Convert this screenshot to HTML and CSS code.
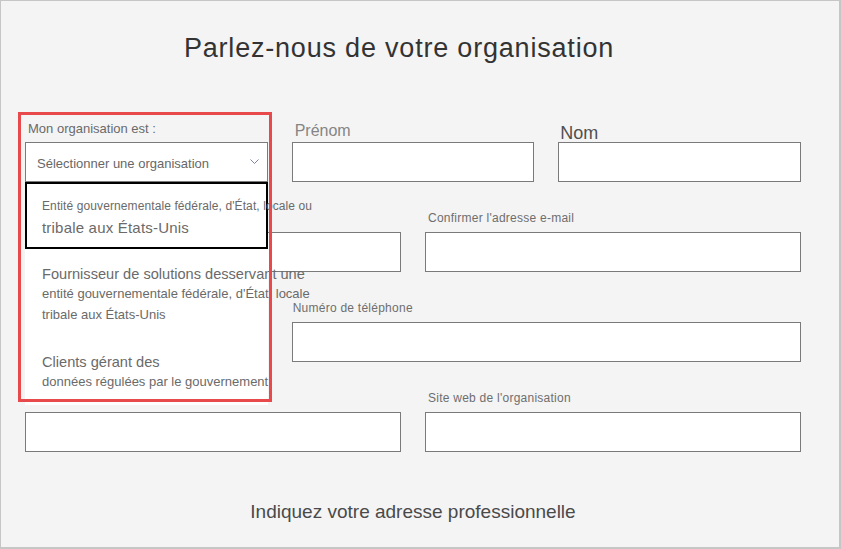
FILE: index.html
```html
<!DOCTYPE html>
<html lang="fr">
<head>
<meta charset="utf-8">
<title>Parlez-nous de votre organisation</title>
<link rel="stylesheet" href="styles.css">
</head>
<body>
<div class="frame">
  <h1 class="title">Parlez-nous de votre organisation</h1>
  <form class="form">
    <div class="row row-3">
      <div class="field field-org">
        <label class="lbl lbl-org">Mon organisation est :</label>
        <div class="select">
          <span>Sélectionner une organisation</span>
          <svg class="chev" width="9" height="5" viewBox="0 0 9 5"><polyline points="0.5,0.5 4.5,4.5 8.5,0.5" fill="none" stroke="#7d83a6" stroke-width="1"/></svg>
        </div>
        <ul class="dropdown">
          <li class="opt opt-active">
            <span class="sm tight">Entité gouvernementale fédérale, d'État, locale ou</span>
            <span class="lg">tribale aux États-Unis</span>
          </li>
          <li class="opt opt-two">
            <span class="md">Fournisseur de solutions desservant une</span>
            <span class="sm2">entité gouvernementale fédérale, d'État, locale</span>
            <span class="sm2">tribale aux États-Unis</span>
          </li>
          <li class="opt opt-three">
            <span class="md">Clients gérant des</span>
            <span class="sm2">données régulées par le gouvernement</span>
          </li>
        </ul>
      </div>
      <div class="field">
        <label class="lbl lbl-first">Prénom</label>
        <div class="input"></div>
      </div>
      <div class="field">
        <label class="lbl lbl-last">Nom</label>
        <div class="input"></div>
      </div>
    </div>
    <div class="row row-2">
      <div class="field">
        <label class="lbl" aria-label="Adresse e-mail"></label>
        <div class="input"></div>
      </div>
      <div class="field">
        <label class="lbl">Confirmer l'adresse e-mail</label>
        <div class="input"></div>
      </div>
    </div>
    <div class="row row-3">
      <div class="field">
        <label class="lbl" aria-label="Intitulé du poste"></label>
        <div class="input"></div>
      </div>
      <div class="field span-2">
        <label class="lbl lbl-phone">Numéro de téléphone</label>
        <div class="input"></div>
      </div>
    </div>
    <div class="row row-2">
      <div class="field">
        <label class="lbl" aria-label="Nom de l'organisation"></label>
        <div class="input"></div>
      </div>
      <div class="field">
        <label class="lbl">Site web de l'organisation</label>
        <div class="input"></div>
      </div>
    </div>
    <h2 class="subtitle">Indiquez votre adresse professionnelle</h2>
  </form>
  <div class="highlight"></div>
</div>
</body>
</html>
```

FILE: styles.css
```css
html, body {
  margin: 0;
  padding: 0;
  background: #f4f4f4;
}

.frame {
  position: relative;
  width: 841px;
  height: 549px;
  box-sizing: border-box;
  border: 1px solid #c6c6c6;
  border-right-width: 2px;
  border-bottom-width: 2px;
  background: #f4f4f4;
  overflow: hidden;
  font-family: "Liberation Sans", Arial, sans-serif;
}

.title {
  margin: 0;
  padding: 31px 42px 0 0;
  font-size: 27px;
  line-height: 32px;
  font-weight: normal;
  letter-spacing: 0.8px;
  text-align: center;
  color: #333333;
}

.form {
  margin: 28px 0 0 24px;
  width: 776px;
}

.row {
  display: grid;
  column-gap: 24px;
}

.row-3 {
  grid-template-columns: 1fr 1fr 1fr;
}

.row-2 {
  grid-template-columns: 1fr 1fr;
}

.span-2 {
  grid-column: span 2;
}

.field {
  display: flex;
  flex-direction: column;
}

.field-org {
  position: relative;
  z-index: 2;
}

.lbl {
  height: 50px;
  box-sizing: border-box;
  display: flex;
  align-items: flex-end;
  padding: 0 0 7px 3px;
  font-size: 12px;
  line-height: 14px;
  letter-spacing: 0.25px;
  color: #6e6e6e;
  white-space: nowrap;
}

.lbl-org {
  font-size: 13px;
  line-height: 15px;
  letter-spacing: 0;
  padding-bottom: 6px;
  color: #6a6a6a;
}

.lbl-first {
  font-size: 16px;
  line-height: 18px;
  letter-spacing: 0;
  padding-bottom: 2.5px;
  color: #858585;
}

.lbl-last {
  font-size: 18px;
  line-height: 18px;
  letter-spacing: 0;
  padding-bottom: 0;
  padding-left: 2px;
  color: #505050;
}

.lbl-phone {
  padding-left: 1px;
}

.input {
  height: 40px;
  box-sizing: border-box;
  border: 1px solid #7a7a7a;
  background: #ffffff;
}

.select {
  height: 40px;
  box-sizing: border-box;
  border: 1px solid #7a7a7a;
  background: #ffffff;
  display: flex;
  align-items: center;
  justify-content: space-between;
  padding: 3px 8px 0 11px;
  font-size: 13px;
  color: #676767;
}

.chev {
  display: block;
  margin-top: -4px;
}

.dropdown {
  position: absolute;
  top: 90px;
  left: 0;
  width: 243px;
  margin: 0;
  padding: 0 0 13px;
  list-style: none;
  background: #ffffff;
  color: #6a6a6a;
  white-space: nowrap;
}

.opt span {
  display: block;
}

.opt-active {
  height: 67px;
  box-sizing: border-box;
  border: 2px solid #000000;
  padding: 15px 0 0 15px;
}

.opt-two {
  padding: 16px 0 0 17px;
}

.opt-three {
  padding: 28px 0 0 17px;
}

.sm {
  font-size: 12px;
  line-height: 14px;
}

.tight {
  letter-spacing: 0.1px;
}

.lg {
  font-size: 15px;
  line-height: 22px;
  margin-top: 4px;
  letter-spacing: 0.2px;
}

.md {
  font-size: 14.6px;
  line-height: 18px;
}

.sm2 {
  font-size: 13px;
  line-height: 21px;
}

.subtitle {
  margin: 49px 0 0;
  font-size: 19px;
  line-height: 22px;
  font-weight: normal;
  text-align: center;
  color: #4a4a4a;
}

.highlight {
  position: absolute;
  left: 17px;
  top: 111px;
  width: 254px;
  height: 290px;
  box-sizing: border-box;
  border: 3px solid #e8494b;
  z-index: 5;
  pointer-events: none;
}
```
